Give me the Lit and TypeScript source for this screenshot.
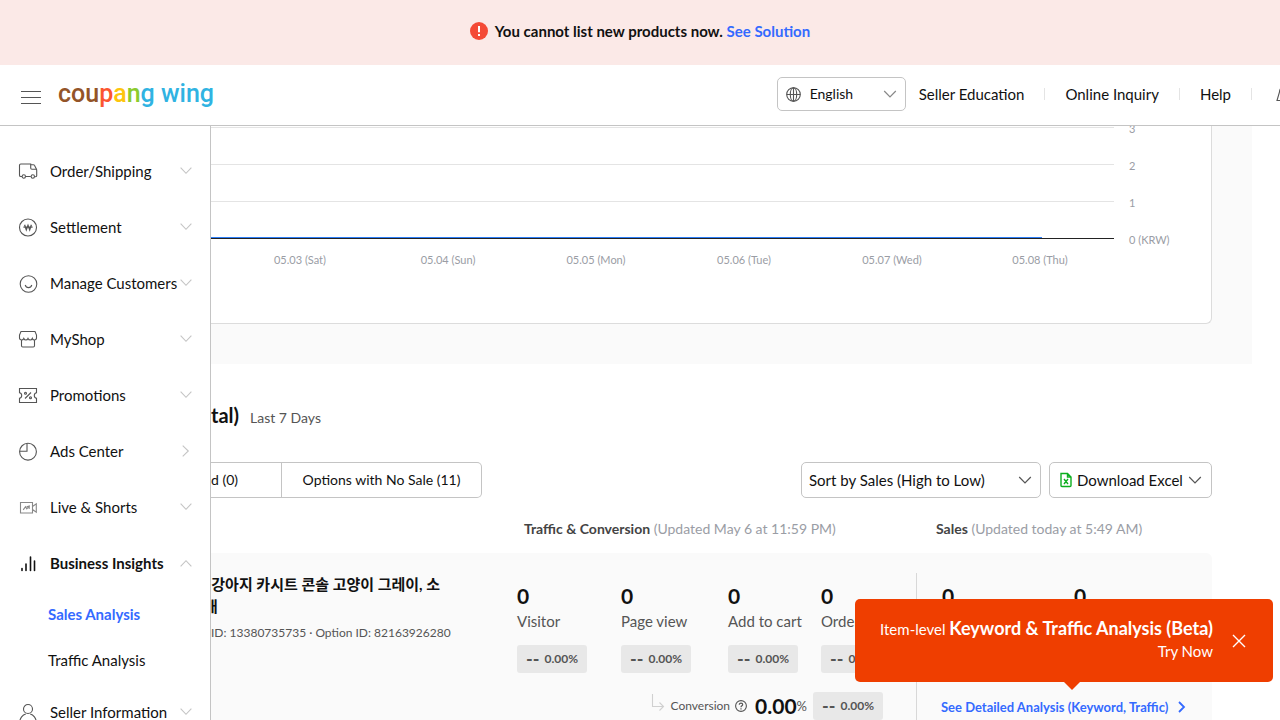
import { LitElement, html, css, svg } from "lit";
import { customElement } from "lit/decorators.js";

const chevron = (cls = "") => html`<svg class="chev ${cls}" viewBox="0 0 14 14" width="14" height="14" aria-hidden="true"><path d="M1.200 4 7 10l5.800-6" /></svg>`;

const icons = {
  truck: svg`<path d="M4 15.500H2.800a1.300 1.300 0 0 1-1.300-1.300V4.300A1.300 1.300 0 0 1 2.800 3h9.900v4.200M12.700 3.700h2.600c.5 0 .9.200 1.100.6l2 3.600c.2.500.3.900.3 1.500v5.300c0 .5-.4.900-.9.900h-.6M7.600 15.500h5.200M12.700 4v3c0 .8.400 1.200 1.200 1.200h4.300"/><circle cx="5.800" cy="15.500" r="1.700"/><circle cx="14.800" cy="15.500" r="1.700"/>`,
  won: svg`<circle cx="10" cy="10.500" r="8.500"/><path d="M6.600 7.800l1.700 5L10 8.300l1.700 4.500 1.700-5M5.400 10.200h9.200" stroke-width="1.300"/>`,
  smile: svg`<circle cx="10.500" cy="11" r="8.300"/><path d="M7.200 12c.5 1.700 1.700 2.600 3.300 2.600s2.800-.9 3.300-2.600"/>`,
  shop: svg`<path d="M3 2.500h14l1.500 3.600v3c0 1.100-1 1.900-2.200 1.900-1 0-1.700-.5-2-1.500-.4 1-1.100 1.500-2.100 1.500s-1.800-.5-2.200-1.500c-.4 1-1.100 1.500-2.100 1.500S6.200 10.500 5.800 9.500c-.4 1-1.100 1.500-2.100 1.500-1.200 0-2.200-.8-2.200-1.900v-3zM3.500 11v5.800c0 .8.500 1.200 1.200 1.200h10.600c.8 0 1.200-.4 1.200-1.200V11"/>`,
  coupon: svg`<path d="M1.500 3.500h17v4.200c-1.500.2-2.200 1.300-2.200 2.800s.7 2.600 2.200 2.800v4.200h-17v-4.200c1.500-.2 2.200-1.300 2.200-2.800S3 7.900 1.500 7.700zM13 7.500l-6 6"/><circle cx="7.500" cy="8.300" r="1"/><circle cx="12.500" cy="12.800" r="1"/>`,
  pie: svg`<circle cx="10" cy="10.700" r="8.400"/><path d="M9 2.400v7.800H1.700"/>`,
  live: svg`<path d="M2.500 5.500h12v10.500h-12zM14.500 9.500 18.300 6.800v8.400l-3.800-2.700M5.200 12.800l2.300-3 1.300 2 2.500-2.800M8.600 9.800l2.700-.8-.2 3" stroke="#888"/>`,
  bars: svg`<path d="M4 17.500v-2M8 17.500v-6.500M12.500 17.500V4M16.500 17.500V8" stroke="#111" stroke-width="1.600" stroke-linecap="round"/>`,
  person: svg`<circle cx="10" cy="7" r="4.500"/><path d="M1.800 20c0-4 2.800-7.200 6-8M18.200 20c0-4-2.800-7.200-6-8"/>`,
};

const before = [
  ["truck", "Order/Shipping"],
  ["won", "Settlement"],
  ["smile", "Manage Customers"],
  ["shop", "MyShop"],
  ["coupon", "Promotions"],
  ["pie", "Ads Center"],
  ["live", "Live & Shorts"],
  ["bars", "Business Insights"],
] as const;

const days = ["05.03 (Sat)", "05.04 (Sun)", "05.05 (Mon)", "05.06 (Tue)", "05.07 (Wed)", "05.08 (Thu)"];
const ticks = ["3", "2", "1", "0 (KRW)"];
const metrics = ["Visitor", "Page view", "Add to cart", "Order"];
const badge = html`<span class="badge"><span class="dash">--</span>0.00%</span>`;

@customElement("app-root")
export class AppRoot extends LitElement {
  static styles = css`
    :host { display: flex; flex-direction: column; height: 100vh; overflow: hidden; background: #fff; color: #111; font: 15px/20px Lato, "Noto Sans CJK KR", sans-serif; --line: #c4c4c4; --blue: #346aff; }
    * { box-sizing: border-box; }
    h2, h3, p, ul { margin: 0; padding: 0; }
    ul { list-style: none; }
    a { color: inherit; text-decoration: none; }
    button, select { font: inherit; color: inherit; background: #fff; border: 1px solid var(--line); border-radius: 5px; padding: 0; cursor: pointer; }
    svg { display: block; flex: none; fill: none; stroke: #555; stroke-width: 1.100; }
    .chev { stroke: #555; stroke-width: 1.200; }
    .chev.pale { stroke: #c4c4c4; }
    .chev.up { transform: rotate(180deg); }
    .chev.right { transform: rotate(-90deg); }

    .banner { flex: none; height: 65px; padding-bottom: 3px; display: flex; align-items: center; justify-content: center; gap: 7px; background: #fbe9e7; font-weight: 700; }
    .banner a { color: var(--blue); }

    header { flex: none; height: 61px; display: flex; align-items: center; padding-left: 20px; border-bottom: 1px solid var(--line); overflow: hidden; }
    .burger { border: 0; }
    .logo { margin-left: 16px; padding-bottom: 2px; font: 500 25px/32px Roboto, sans-serif; color: #30b3e2; white-space: nowrap; }
    .l1 { color: #935428; } .l2 { color: #fb5530; } .l3 { color: #fdc50d; } .l4 { color: #8bcb2d; }
    .tools { margin-left: auto; margin-right: -14px; padding-bottom: 2px; display: flex; align-items: center; white-space: nowrap; }
    .tools a { padding: 0 20px; border-right: 1px solid #e4e4e4; line-height: 12px; }
    .tools a:first-of-type { padding-left: 13px; }
    .tools .bell { border: 0; margin-left: 24px; }
    .field { position: relative; display: flex; align-items: center; }
    .field svg { position: absolute; pointer-events: none; }
    .field select { appearance: none; width: 100%; height: 100%; }
    .lang { width: 129px; height: 34px; }
    .lang select { padding-left: 32px; font-size: 14px; }
    .lang .globe { left: 9px; }
    .lang .chev { right: 9px; stroke: #888; }

    .body { flex: 1; min-height: 0; display: flex; }
    nav { flex: none; width: 211px; border-right: 1px solid var(--line); padding-top: 17px; overflow: hidden; }
    .item { display: flex; align-items: center; height: 56px; padding: 0 17px 0 18px; gap: 12px; white-space: nowrap; }
    .item .chev { padding-bottom: 1px; }
    .item span { flex: 1; width: 0; }
    .item.open { font-weight: 700; }
    .sub { padding: 0 0 1px 48px; }
    .sub li { height: 46px; line-height: 46px; }
    .sub .on { color: var(--blue); font-weight: 700; }

    main { flex: 1; min-width: 0; overflow: hidden; }
    .chart { margin-right: 28px; padding: 0 40px 40px 0; background: #fafafa; }
    .card { height: 198px; background: #fff; border: solid #dcdcdc; border-width: 0 1px 1px 0; border-bottom-right-radius: 6px; padding-right: 32px; display: grid; grid-template-columns: 1fr 65px; grid-template-rows: 113px 20px; row-gap: 11px; color: #9a9da5; font-size: 11px; }
    .plot { padding-top: 1px; }
    .plot i { display: block; height: 37px; border-top: 1px solid #e4e4e4; }
    .plot i:nth-child(3) { height: 36px; }
    .plot .base { height: 2px; border-bottom: 1px solid #222; border-top: 0; }
    .plot .base::before { content: ""; display: block; height: 1px; width: 92%; background: #2d7ff9; }
    .ticks { padding-left: 15px; }
    .ticks li { height: 37px; line-height: 6px; }
    .days { display: grid; grid-template-columns: repeat(6, 1fr); padding-left: 15px; text-align: center; }

    .list { padding: 39px 68px 0 0; }
    .title { display: flex; align-items: baseline; gap: 11px; height: 59px; color: #555; font-size: 14px; }
    h2 { font-size: 20px; line-height: 24px; color: #111; }
    .controls { display: flex; height: 36px; gap: 8px; }
    .tabs { display: flex; margin-right: auto; font-size: 14px; }
    .tabs button { border-radius: 0; border-left: 0; width: 71px; text-align: left; }
    .tabs button:last-child { width: 200px; text-align: center; border-radius: 0 5px 5px 0; }
    .sort { width: 240px; }
    .sort select { padding-left: 7px; }
    .sort .chev { right: 9px; }
    .excel { width: 163px; display: flex; align-items: center; gap: 4px; padding: 0 9px; white-space: nowrap; }
    .excel .chev { margin-left: auto; }
    .cols { display: grid; grid-template-columns: 1fr 399px 296px; }
    .heads { height: 55px; align-items: center; padding-top: 7px; color: #9a9da5; font-size: 14px; }
    .heads p { padding-left: 7px; }
    .heads p:last-child { padding-left: 20px; }
    .heads b { color: #444; }
    .row { height: 200px; background: #fafafa; border-radius: 0 6px 6px 0; padding-top: 20px; }
    .product { margin-left: -7px; font-size: 12px; color: #555; white-space: nowrap; }
    .product h3 { font-size: 15px; line-height: 22px; color: #111; }
    .product p { margin-top: 6px; padding-left: 7px; }
    .metrics { display: grid; grid-template-columns: 104px 107px 93px 1fr; color: #555; }
    .num { font-size: 21px; line-height: 26px; font-weight: 700; color: #111; margin-top: 10px; }
    .num.inline { margin: 0; }
    .label { margin-top: 2px; }
    .badge { display: flex; align-items: center; justify-content: center; gap: 5px; width: 70px; height: 28px; padding-bottom: 1px; margin-top: 14px; border-radius: 3px; background: #e8e8e8; font-size: 12px; font-weight: 700; color: #555; }
    .dash { font-size: 18px; }
    .conv { display: flex; align-items: center; justify-content: flex-end; margin: 19px 33px 0 0; font-size: 12px; color: #555; }
    .conv .badge { margin: 0 0 0 6px; }
    .conv .help { margin: 0 8px 0 5px; }
    .conv .arrow { margin: -8px 6px 0 0; }
    .pct { font-size: 13px; }
    .sales { border-left: 1px solid #d8d8d8; padding-left: 24px; }
    .pair { display: grid; grid-template-columns: 132px 1fr; padding-left: 1px; }
    .detail { position: relative; margin-top: 88px; }
    .detail > a { display: flex; align-items: center; gap: 8px; color: var(--blue); font-size: 13px; font-weight: 700; white-space: nowrap; }
    .tip { position: absolute; left: -86px; bottom: 35px; width: 418px; height: 83px; padding: 18px 27px 0 20px; display: flex; gap: 19px; border-radius: 5px; background: #ef3e00; color: #fff; }
    .tip::after { content: ""; position: absolute; left: 209px; top: 83px; border: 8px solid transparent; border-top-color: #ef3e00; border-bottom: 0; }
    .tip p { flex: 1; text-align: right; line-height: 22px; white-space: nowrap; font-size: 15px; }
    .tip strong { font-size: 18px; }
    .tip button { background: none; border: 0; height: 14px; margin-top: 17px; }
  `;

  render() {
    return html`
      <div class="banner">
        <svg width="18" height="18" viewBox="0 0 18 18" aria-hidden="true"><circle cx="9" cy="9" r="9" fill="#f44a36" stroke="none"/><path d="M9 4v6.200M9 12v2" stroke="#fff" stroke-width="2"/></svg>
        <span>You cannot list new products now. <a href="#solution">See Solution</a></span>
      </div>
      <header>
        <button class="burger" aria-label="Menu"><svg width="22" height="18" viewBox="0 0 22 18"><path d="M1 5.500h20M1 11.500h20M1 17.500h20" stroke-width="1"/></svg></button>
        <a class="logo" href="#home"><span class="l1">cou</span><span class="l2">p</span><span class="l3">a</span><span class="l4">n</span>g wing</a>
        <div class="tools">
          <div class="field lang">
            <select aria-label="Language"><option>English</option></select>
            <svg class="globe" width="15" height="15" viewBox="0 0 15 15"><circle cx="7.500" cy="7.500" r="6.800"/><ellipse cx="7.500" cy="7.500" rx="3.200" ry="6.800"/><path d="M.7 7.500h13.600M7.500.7v13.600"/></svg>
            ${chevron()}
          </div>
          <a href="#education">Seller Education</a><a href="#inquiry">Online Inquiry</a><a href="#help">Help</a>
          <svg class="bell" width="18" height="18" viewBox="0 0 18 18" aria-hidden="true"><path d="M1 15.500h16L14.500 7a5.500 5.500 0 0 0-11 0z"/></svg>
        </div>
      </header>
      <div class="body">
        <nav>
          ${before.map(([icon, label]) => html`<a href="#menu" class="item ${icon === "bars" ? "open" : ""}">
            <svg width="20" height="20" viewBox="0 0 20 20" aria-hidden="true">${icons[icon]}</svg><span>${label}</span>${chevron(icon === "bars" ? "pale up" : icon === "pie" ? "pale right" : "pale")}</a>`)}
          <ul class="sub">
            <li><a class="on" href="#sales">Sales Analysis</a></li>
            <li><a href="#traffic">Traffic Analysis</a></li>
          </ul>
          <a href="#seller" class="item"><svg width="20" height="20" viewBox="0 0 20 20" aria-hidden="true">${icons.person}</svg><span>Seller Information</span>${chevron("pale")}</a>
        </nav>
        <main>
          <section class="chart">
            <div class="card">
              <div class="plot"><i></i><i></i><i></i><i class="base"></i></div>
              <ul class="ticks">${ticks.map((t) => html`<li>${t}</li>`)}</ul>
              <div class="days">${days.map((d) => html`<span>${d}</span>`)}</div>
            </div>
          </section>
          <section class="list">
            <div class="title"><h2>tal)</h2><span>Last 7 Days</span></div>
            <div class="controls">
              <div class="tabs"><button>d (0)</button><button>Options with No Sale (11)</button></div>
              <div class="field sort"><select aria-label="Sort"><option>Sort by Sales (High to Low)</option></select>${chevron()}</div>
              <button class="excel"><svg width="14" height="16" viewBox="0 0 14 16" aria-hidden="true"><path d="M2 1.500h6.500l3.500 3.500v8.500c0 .6-.4 1-1 1H3c-.6 0-1-.4-1-1zM8.500 1.500V5H12M5 7l4 5M9 7l-4 5" stroke="#0cae1e" stroke-width="1.400"/></svg>Download Excel${chevron()}</button>
            </div>
            <div class="cols heads"><span></span><p><b>Traffic &amp; Conversion</b> (Updated May 6 at 11:59 PM)</p><p><b>Sales</b> (Updated today at 5:49 AM)</p></div>
            <div class="cols row">
              <div class="product"><h3>&nbsp;&nbsp;강아지 카시트 콘솔 고양이 그레이, 소<br>매</h3><p>ID: 13380735735 · Option ID: 82163926280</p></div>
              <div class="traffic">
                <div class="metrics">${metrics.map((m) => html`<div><p class="num">0</p><p class="label">${m}</p>${badge}</div>`)}</div>
                <div class="conv">
                  <svg class="arrow" width="14" height="17" viewBox="0 0 14 17" aria-hidden="true"><path d="M1.500 0v12.500h11M8.500 8.500l4 4-4 4" stroke="#d0d0d0"/></svg>
                  <span>Conversion</span>
                  <svg class="help" width="12" height="12" viewBox="0 0 12 12" aria-hidden="true"><circle cx="6" cy="6" r="5.400"/><path d="M4.300 4.700c0-2.200 3.400-2.100 3.400 0C7.700 5.900 6 5.800 6 7.200M6 8.200v1.200" stroke-width="1.200"/></svg>
                  <span class="num inline">0.00</span><span class="pct">%</span>${badge}
                </div>
              </div>
              <div class="sales">
                <div class="pair"><p class="num">0</p><p class="num">0</p></div>
                <div class="detail">
                  <a href="#detail">See Detailed Analysis (Keyword, Traffic)<svg width="11" height="12" viewBox="0 0 11 12" aria-hidden="true"><path d="m3 1 5 5-5 5" stroke="#346aff" stroke-width="1.800"/></svg></a>
                  <div class="tip" role="tooltip"><p>Item-level <strong>Keyword &amp; Traffic Analysis (Beta)</strong><br>Try Now</p>
                    <button aria-label="Close"><svg width="14" height="14" viewBox="0 0 14 14"><path d="m1 1 12 12M13 1 1 13" stroke="#fff" stroke-width="1.400"/></svg></button></div>
                </div>
              </div>
            </div>
          </section>
        </main>
      </div>
    `;
  }
}
